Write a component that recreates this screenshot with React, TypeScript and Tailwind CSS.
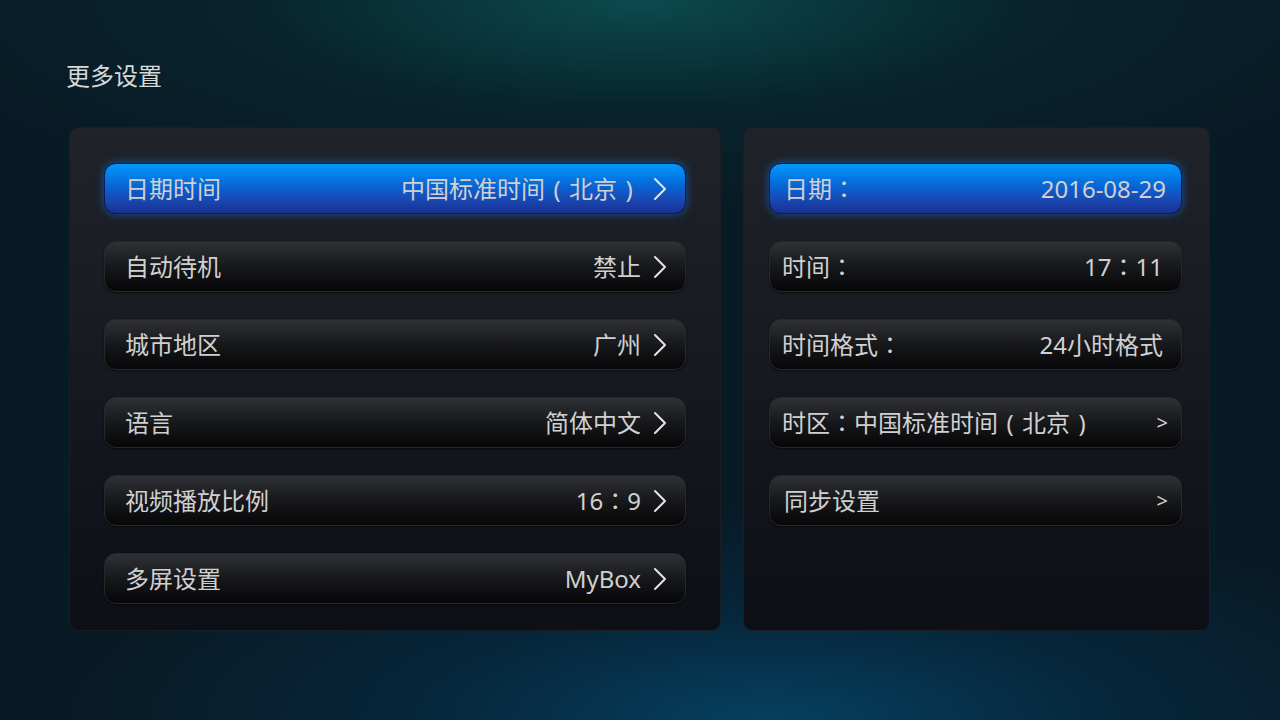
import { ReactNode } from "react";

const font = {
  fontFamily: '"Noto Sans", "Noto Sans CJK SC", sans-serif',
};

// full-width punctuation drawn centred in a one-em cell
function Text({ children }: { children: string }) {
  const parts = children.split(/([：（）])/);
  return (
    <>
      {parts.map((p, i) => {
        if (p === "：")
          return (
            <span key={i} style={{ fontFamily: '"Noto Sans CJK TC", sans-serif' }}>
              {p}
            </span>
          );
        if (p === "（" || p === "）")
          return (
            <span key={i} className="inline-block w-[1em] text-center">
              {p === "（" ? "(" : ")"}
            </span>
          );
        return p;
      })}
    </>
  );
}

function Chevron() {
  return (
    <svg width="14" height="24" viewBox="0 0 14 24" className="ml-3 shrink-0">
      <polyline
        points="2,2 12,12 2,22"
        fill="none"
        stroke="#e4e4e4"
        strokeWidth="2"
        strokeLinecap="round"
        strokeLinejoin="round"
      />
    </svg>
  );
}

function Row({
  label,
  value,
  active,
  tail,
  className = "",
}: {
  label: string;
  value?: string;
  active?: boolean;
  tail?: ReactNode;
  className?: string;
}) {
  const skin = active
    ? "bg-gradient-to-b from-[#0399fd] via-[#0a5fd0] to-[#1b2f93] border-[#0a1f5a] shadow-[0_0_10px_rgba(20,130,255,0.55)]"
    : "bg-gradient-to-b from-[#303136] via-[#17181b] to-[#070708] border-[#26282c] shadow-[0_1px_2px_rgba(0,0,0,0.6)]";
  return (
    <div
      className={`flex h-[51px] items-center rounded-[12px] border text-[24px] text-[#d0d0d0] ${skin} ${className}`}
    >
      <span className="flex-1 whitespace-nowrap">
        <Text>{label}</Text>
      </span>
      {value && (
        <span className="whitespace-nowrap">
          <Text>{value}</Text>
        </span>
      )}
      {tail}
    </div>
  );
}

const left = [
  { label: "日期时间", value: "中国标准时间（北京）" },
  { label: "自动待机", value: "禁止" },
  { label: "城市地区", value: "广州" },
  { label: "语言", value: "简体中文" },
  { label: "视频播放比例", value: "16：9" },
  { label: "多屏设置", value: "MyBox" },
];

export default function App() {
  return (
    <div
      className="relative h-[720px] w-[1280px] overflow-hidden bg-[#081a25]"
      style={font}
    >
      <div className="absolute inset-0 bg-[radial-gradient(ellipse_60%_30%_at_50%_0%,#0b4a4e_0%,rgba(8,40,48,0.7)_50%,transparent_100%)]" />
      <div className="absolute inset-0 bg-[radial-gradient(ellipse_55%_30%_at_60%_100%,#05405f_0%,rgba(5,50,80,0.5)_50%,transparent_100%)]" />

      <div className="relative flex flex-col px-[66px] pt-[59px]">
        <h1 className="text-[24px] leading-[34px] text-[#d8d8d8]">更多设置</h1>

        <div className="mt-[34px] flex gap-[22px] pl-[3px]">
          <section className="flex h-[504px] w-[652px] flex-col gap-[27px] rounded-[10px] border border-[#1a1d22] bg-gradient-to-b from-[#202329] to-[#0c1016] px-[34px] pt-[35px]">
            {left.map((r, i) => (
              <Row
                key={r.label}
                label={r.label}
                value={r.value}
                active={i === 0}
                className="pl-[20px] pr-[18px]"
                tail={<Chevron />}
              />
            ))}
          </section>

          <section className="flex h-[504px] w-[467px] flex-col gap-[27px] rounded-[10px] border border-[#1a1d22] bg-gradient-to-b from-[#202329] to-[#0c1016] pl-[25px] pr-[27px] pt-[35px]">
            <Row label="日期：" value="2016-08-29" active className="pl-[14px] pr-[15px]" />
            <Row label="时间：" value="17：11" className="pl-[12px] pr-[18px]" />
            <Row label="时间格式：" value="24小时格式" className="pl-[12px] pr-[18px]" />
            <Row
              label="时区：中国标准时间（北京）"
              className="pl-[12px] pr-[13px]"
              tail={<span className="text-[20px]">&gt;</span>}
            />
            <Row
              label="同步设置"
              className="pl-[14px] pr-[13px]"
              tail={<span className="text-[20px]">&gt;</span>}
            />
          </section>
        </div>
      </div>
    </div>
  );
}
